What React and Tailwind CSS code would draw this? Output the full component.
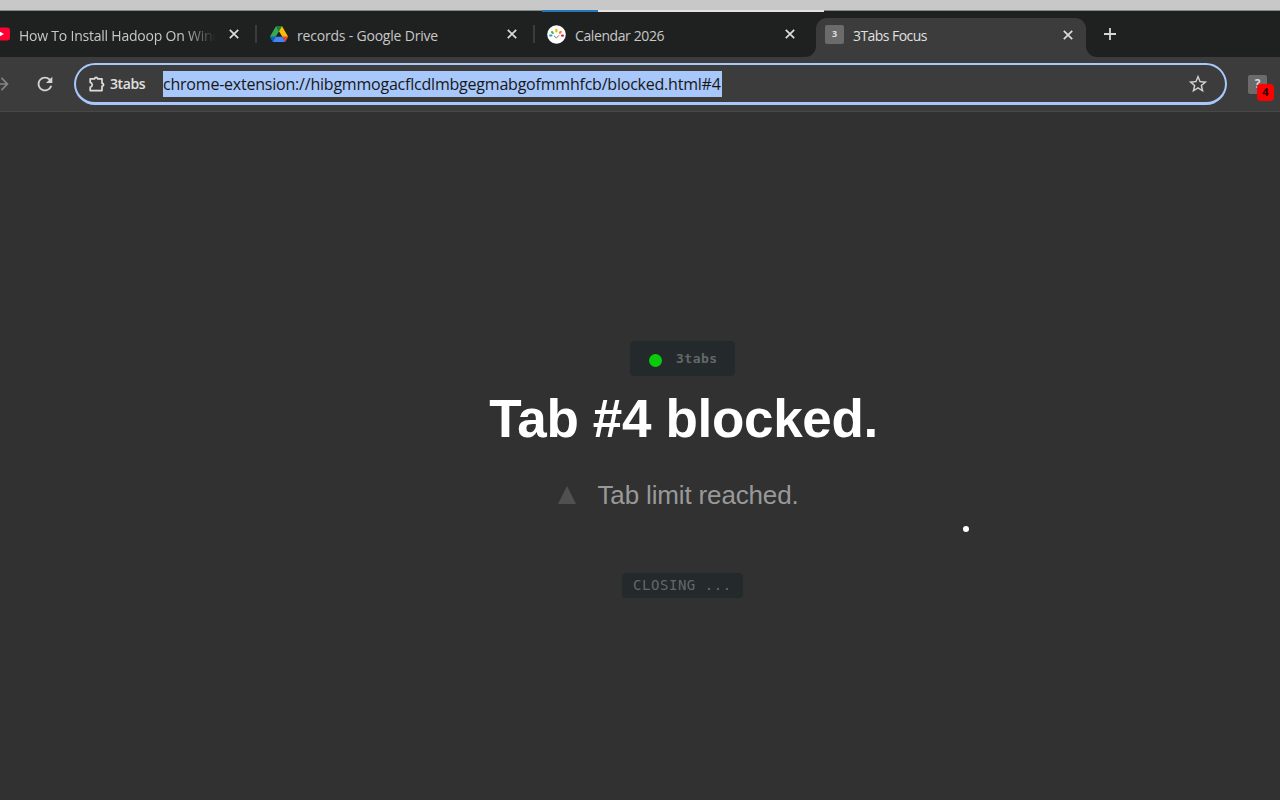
import React from "react";
import { MdRefresh, MdArrowForward, MdStarBorder } from "react-icons/md";

const CloseIcon = () => (
  <svg className="h-[10px] w-[10px] shrink-0" viewBox="0 0 10 10" stroke="#dcdcdc" strokeWidth="1.7" fill="none">
    <path d="M0.8 0.8 9.2 9.2M9.2 0.8 0.8 9.2" />
  </svg>
);

const YoutubeIcon = () => (
  <svg className="h-[14px] w-[19px]" viewBox="0 0 19 14">
    <rect width="19" height="13" y="0.5" rx="3" fill="#ff0033" />
    <path d="M7.5 4v6l5.5-3z" fill="#fff" />
  </svg>
);

const DriveIcon = () => (
  <svg className="h-[16px] w-[18px]" viewBox="0 0 87.3 78">
    <path d="m6.6 66.85 3.85 6.65c.8 1.4 1.95 2.5 3.3 3.3l13.75-23.8h-27.5c0 1.55.4 3.1 1.2 4.5z" fill="#0066da" />
    <path d="m43.65 25-13.75-23.8c-1.35.8-2.5 1.9-3.3 3.3l-25.4 44a9.06 9.06 0 0 0 -1.2 4.5h27.5z" fill="#34a853" />
    <path d="m73.55 76.8c1.35-.8 2.5-1.9 3.3-3.3l1.6-2.75 7.65-13.25c.8-1.4 1.2-2.95 1.2-4.5h-27.5l5.85 11.5z" fill="#ea4335" />
    <path d="m43.65 25 13.75-23.8c-1.35-.8-2.9-1.2-4.5-1.2h-18.5c-1.6 0-3.15.45-4.5 1.2z" fill="#188038" />
    <path d="m59.8 53h-32.3l-13.75 23.8c1.35.8 2.9 1.2 4.5 1.2h50.8c1.6 0 3.15-.45 4.5-1.2z" fill="#4285f4" />
    <path d="m73.4 26.5-12.7-22c-.8-1.4-1.95-2.5-3.3-3.3l-13.75 23.8 16.15 28h27.45c0-1.55-.4-3.1-1.2-4.5z" fill="#fbbc04" />
  </svg>
);

const CalendarIcon = () => (
  <svg className="h-[19px] w-[19px]" viewBox="0 0 19 19">
    <circle cx="9.5" cy="9.5" r="9.3" fill="#fff" />
    <g strokeWidth="2.2" strokeLinecap="round" fill="none">
      <path d="M3.2 10.5h1.2" stroke="#1e9be0" />
      <path d="M5 7l.8.9" stroke="#58b947" />
      <path d="M9.4 4.8v1.6" stroke="#f5b400" />
      <path d="M13.8 6.8l-.8 1" stroke="#f58220" />
      <path d="M15 10.6h1" stroke="#e5175c" />
    </g>
    <path d="M7 10.8 9.4 13l2.6-2.6" stroke="#777" strokeWidth="1" fill="none" />
  </svg>
);

const PuzzleIcon = () => (
  <svg className="h-[16px] w-[16px] shrink-0" viewBox="0 0 16 16" fill="none" stroke="#dedede" strokeWidth="1.7" strokeLinejoin="round">
    <path d="M1.2 2.8H5.6C5.8 0.9 8.4 0.9 8.6 2.8H13V7.3C15.2 7.4 15.2 10 13 10.1V14.6H1.2V11.2C3.9 10.4 3.9 7.2 1.2 6.4Z" />
  </svg>
);

const ThreeIcon = () => (
  <div className="flex h-[19px] w-[19px] items-center justify-center rounded-[2px] bg-[#6b6b6b] pb-px font-['Open_Sans',sans-serif] text-[9px] font-bold text-[#dedede]">3</div>
);

const tabs = [
  { title: "How To Install Hadoop On Wind", icon: <YoutubeIcon />, fade: true, divider: true, spacing: "tracking-[-0.22px]" },
  { title: "records - Google Drive", icon: <DriveIcon />, divider: true, spacing: "tracking-[-0.2px]" },
  { title: "Calendar 2026", icon: <CalendarIcon />, spacing: "tracking-[-0.4px]" },
];

const TabStrip = () => (
  <div className="flex h-[46px] bg-[#1f2121] font-['Open_Sans',sans-serif] text-[14px] text-[#c7c7c7]">
    <div className="-ml-[20px] flex shrink-0">
      {tabs.map((tab) => (
        <div key={tab.title} className="flex h-[46px] w-[278px] items-center pl-[11px]">
          <div className="flex w-[19px] shrink-0 justify-center">{tab.icon}</div>
          <div
            className={`ml-[9px] w-[196px] shrink-0 overflow-hidden pt-[2px] whitespace-nowrap ${tab.spacing} ${
              tab.fade ? "[mask-image:linear-gradient(to_right,black_165px,transparent_197px)]" : ""
            }`}
          >
            {tab.title}
          </div>
          <div className="ml-[14px]"><CloseIcon /></div>
          {tab.divider && <div className="ml-[16px] h-[18px] w-[2px] bg-[#3a3c3c]"></div>}
        </div>
      ))}
    </div>
    <div className="relative mt-[7px] ml-[2px] flex h-[39px] w-[270px] shrink-0 items-center rounded-t-[11px] bg-[#3c3c3c] pb-[6px] pl-[9px] text-[#e0e0e0]">
      <svg className="absolute bottom-0 -left-[11px] h-[11px] w-[11px]" viewBox="0 0 11 11"><path d="M11 0v11H0A11 11 0 0 0 11 0z" fill="#3c3c3c" /></svg>
      <svg className="absolute bottom-0 -right-[11px] h-[11px] w-[11px]" viewBox="0 0 11 11"><path d="M0 0v11H11A11 11 0 0 1 0 0z" fill="#3c3c3c" /></svg>
      <ThreeIcon />
      <div className="ml-[9px] w-[210px] pt-[2px] tracking-[-0.55px]">3Tabs Focus</div>
      <CloseIcon />
    </div>
    <svg className="mt-[17px] ml-[18px] h-[12px] w-[12px]" viewBox="0 0 12 12" stroke="#d6d6d6" strokeWidth="1.8">
      <path d="M6 0v12M0 6h12" />
    </svg>
  </div>
);

const Toolbar = () => (
  <div className="flex h-[55px] items-center border-b border-[#484848] bg-[#3c3c3c] font-['Open_Sans',sans-serif]">
    <MdArrowForward className="-ml-[8px] h-[20px] w-[20px] shrink-0 text-[#858585]" />
    <MdRefresh className="ml-[22px] h-[22px] w-[22px] shrink-0 text-[#d4d4d4]" />
    <div className="ml-[18px] flex h-[42px] w-[1153px] shrink-0 items-center rounded-full border-2 border-b-3 border-[#a8c7fa] pl-[13px]">
      <PuzzleIcon />
      <span className="ml-[5px] w-[53px] shrink-0 text-[14px] font-semibold tracking-[-0.4px] text-[#e0e0e0]">3tabs</span>
      <span className="h-[26px] w-[559px] shrink-0 bg-[#a8c7fa] text-[16px] leading-[26px] tracking-[-0.215px] whitespace-nowrap text-[#171717]">
        chrome-extension://hibgmmogacflcdlmbgegmabgofmmhfcb/blocked.html#4
      </span>
      <MdStarBorder className="ml-[465px] h-[22px] w-[22px] shrink-0 text-[#d0d0d0]" />
    </div>
    <div className="relative ml-[21px] flex h-[19px] w-[19px] shrink-0 items-center justify-center rounded-[2px] bg-[#6b6b6b] text-[12px] font-bold text-[#d8d8d8]">
      ?
      <div className="absolute top-[9px] left-[9px] flex h-[17px] w-[17px] items-center justify-center rounded-[4px] bg-[#ff0000] text-[11px] font-bold text-[#2b0000]">4</div>
    </div>
  </div>
);

const BlockedPage = () => (
  <main className="relative flex h-[688px] flex-col items-center bg-[#313131] pl-[85px]">
    <div className="mt-[229px] flex h-[35px] w-[105px] items-center rounded-[4px] bg-[#24292c] pl-[19px]">
      <span className="mt-[3px] h-[13px] w-[13px] rounded-full bg-[#0acb0a]"></span>
      <span className="ml-[14px] font-['DejaVu_Sans_Mono',monospace] text-[13px] font-bold tracking-[0.5px] text-[#636867]">3tabs</span>
    </div>
    <h1 className="mt-[13px] ml-[2px] font-['Liberation_Sans',sans-serif] text-[53px] leading-[60px] font-bold tracking-[-0.33px] whitespace-nowrap text-white">Tab #4 blocked.</h1>
    <div className="mt-[31px] flex h-[30px] w-[250px] items-center">
      <svg className="h-[18px] w-[18px]" viewBox="0 0 18 18"><path d="M9 0 18 18H0z" fill="#505050" /></svg>
      <p className="ml-[22px] font-['Liberation_Sans',sans-serif] text-[26px] leading-[30px] tracking-[-0.15px] whitespace-nowrap text-[#999]">Tab limit reached.</p>
    </div>
    <div className="mt-[63px] flex h-[25px] w-[121px] items-center rounded-[4px] bg-[#24292c] pl-[11px] font-['DejaVu_Sans_Mono',monospace] text-[14px] tracking-[0.55px] whitespace-nowrap text-[#636867]">
      CLOSING ...
    </div>
    <span className="absolute top-[414px] left-[963px] h-[6px] w-[6px] rounded-full bg-white"></span>
  </main>
);

const App = () => {
  return (
    <div className="h-[800px] w-[1280px] overflow-hidden bg-[#313131]">
      {/* Sliver of the window behind the browser */}
      <div className="relative h-[11px] border-b border-[#858987] bg-[#c8c8c8]">
        <div className="absolute top-[10px] left-[542px] z-10 h-[2px] w-[56px] bg-[#2478b8]"></div>
        <div className="absolute top-[10px] left-[598px] z-10 h-[2px] w-[226px] bg-[#e2e2e2]"></div>
      </div>
      <TabStrip />
      <Toolbar />
      <BlockedPage />
    </div>
  );
};

export default App;
